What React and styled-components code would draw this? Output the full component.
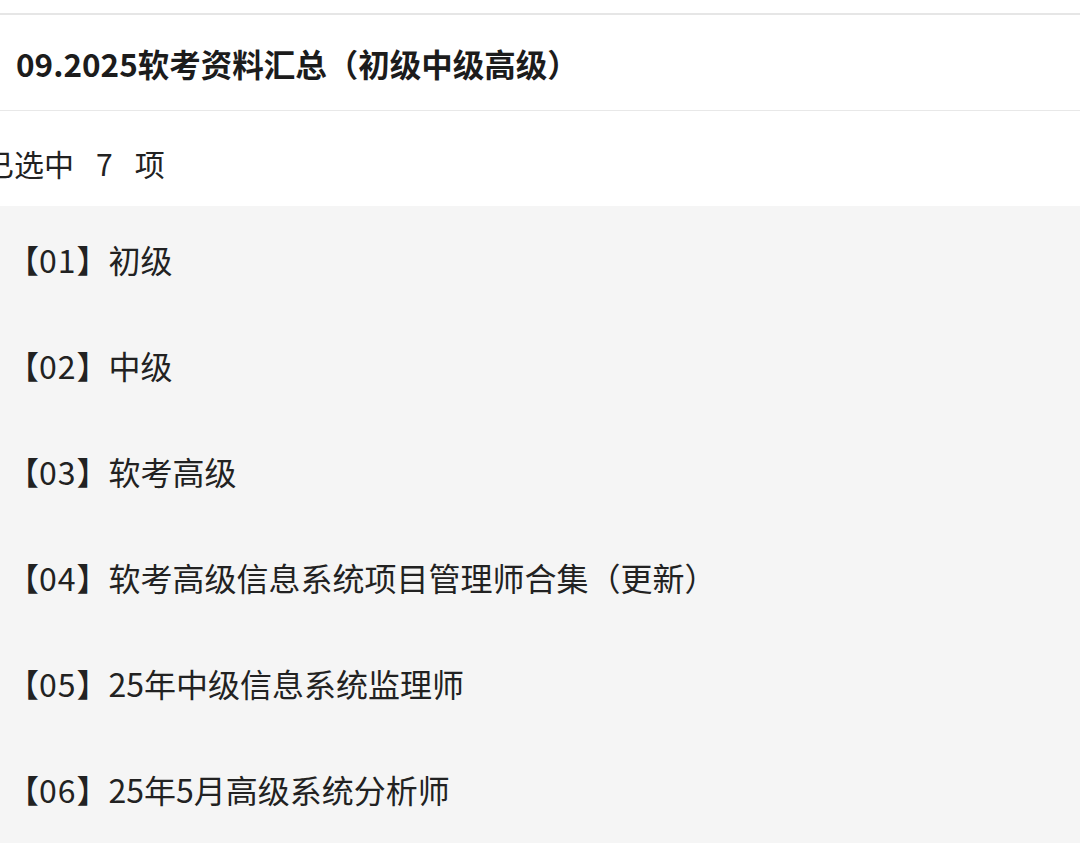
import React from "react";
import styled, { createGlobalStyle } from "styled-components";

const GlobalStyle = createGlobalStyle`
  html, body {
    margin: 0;
    padding: 0;
    background: #ffffff;
  }
  body {
    font-family: "Noto Sans CJK SC", "Noto Sans", sans-serif;
    color: #222222;
    overflow: hidden;
  }
`;

const Page = styled.div`
  width: 1080px;
  height: 843px;
  overflow: hidden;
  background: #ffffff;
`;

const TopStrip = styled.div`
  height: 13px;
  border-bottom: 2px solid #e6e6e6;
`;

const Header = styled.div`
  height: 95px;
  display: flex;
  align-items: center;
  padding-left: 16px;
  border-bottom: 1px solid #e8e8e8;
`;

const Title = styled.h1`
  margin: 0;
  font-size: 31.5px;
  font-weight: 600;
  color: #1c1c1c;
  white-space: nowrap;
`;

const SelectionBar = styled.div`
  height: 95px;
  display: flex;
  align-items: center;
  padding-top: 8px;
  box-sizing: border-box;
  margin-left: -16px;
  font-size: 30px;
  color: #222222;
  white-space: nowrap;
`;

const Count = styled.span`
  margin: 0 22px;
`;

const List = styled.ul`
  list-style: none;
  margin: 0;
  padding: 0;
  background: #f5f5f5;
  height: 640px;
`;

const Item = styled.li`
  height: 106px;
  display: flex;
  align-items: center;
  padding-left: 7px;
  font-size: 32px;
  color: #222222;
  white-space: nowrap;
`;

const Digits = styled.span`
  letter-spacing: 1px;
`;

const items = [
  ["01", "初级"],
  ["02", "中级"],
  ["03", "软考高级"],
  ["04", "软考高级信息系统项目管理师合集（更新）"],
  ["05", "25年中级信息系统监理师"],
  ["06", "25年5月高级系统分析师"],
];

export default function App() {
  return (
    <Page>
      <GlobalStyle />
      <TopStrip />
      <Header>
        <Title>09.2025软考资料汇总（初级中级高级）</Title>
      </Header>
      <SelectionBar>
        已选中<Count>7</Count>项
      </SelectionBar>
      <List>
        {items.map(([no, text]) => (
          <Item key={no}>
            【<Digits>{no}</Digits>】{text}
          </Item>
        ))}
      </List>
    </Page>
  );
}
